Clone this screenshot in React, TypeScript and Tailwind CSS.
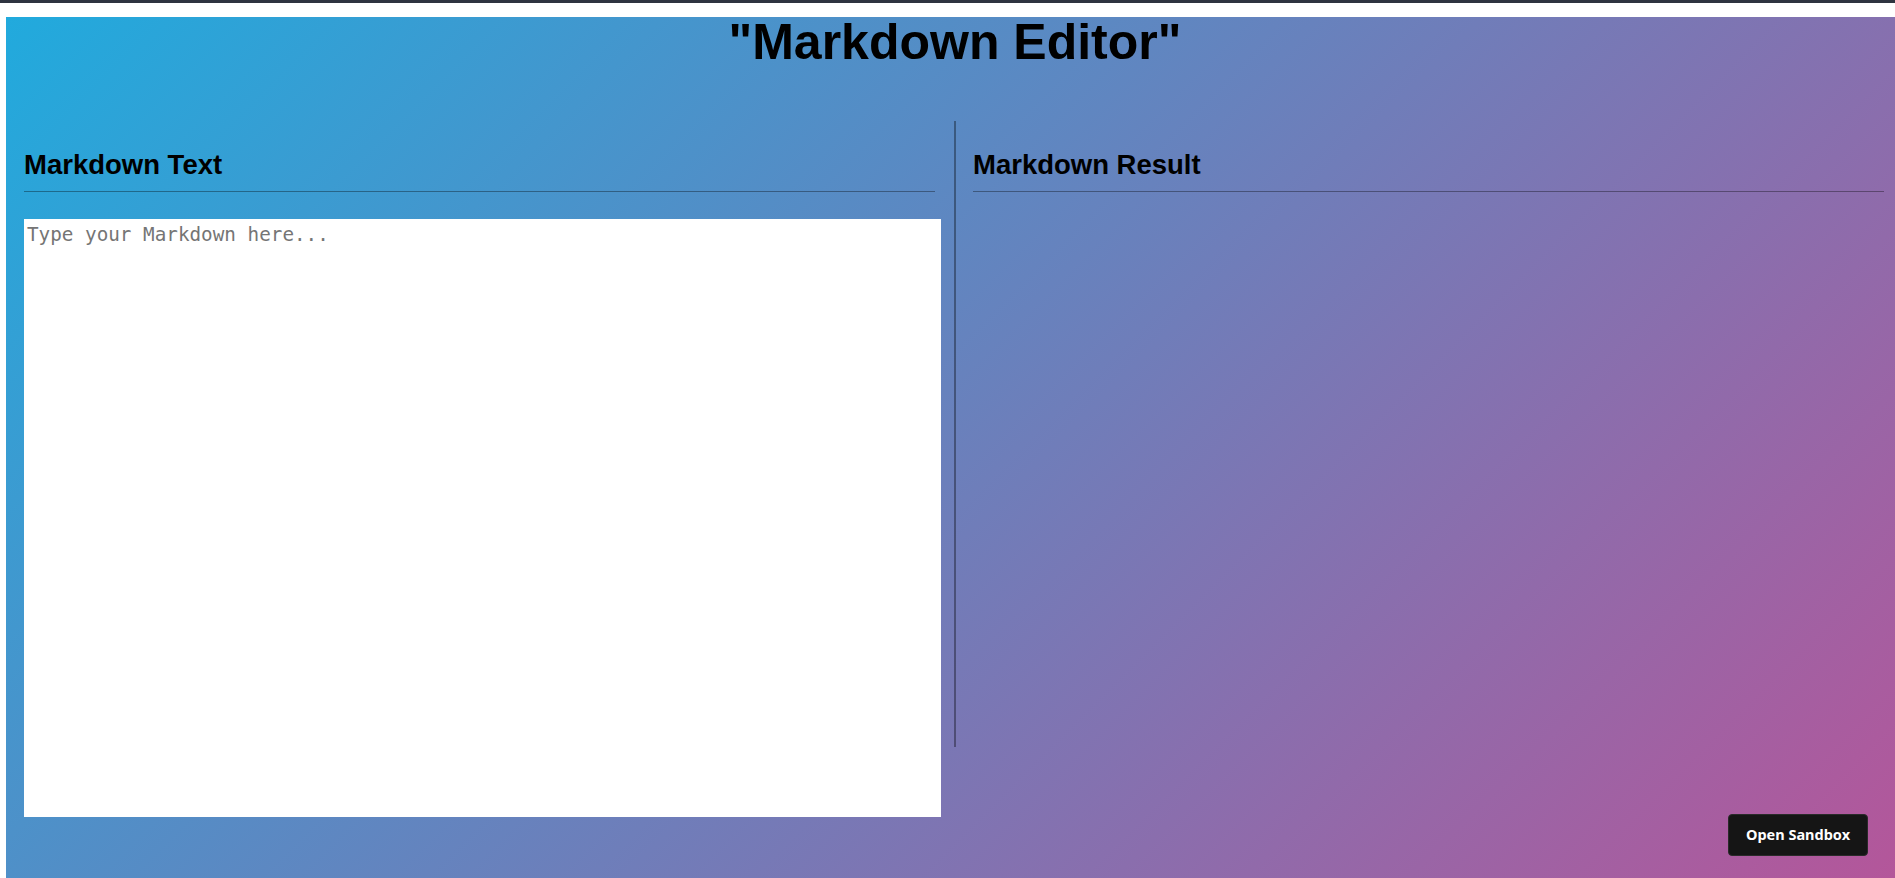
import { useState } from "react";

const sans = { fontFamily: '"Liberation Sans", Arial, sans-serif' };

function Panel({ title, children }: { title: string; children?: React.ReactNode }) {
  return (
    <div className="w-[911px] shrink-0 pt-[28px]">
      <h2
        style={sans}
        className="border-b border-black/35 pb-[11px] text-[27.5px] font-bold leading-[31px] text-black"
      >
        {title}
      </h2>
      {children}
    </div>
  );
}

export default function App() {
  const [text, setText] = useState("");

  return (
    <div className="relative h-[878px] overflow-hidden border-t-[3px] border-[#2e3440] bg-white pl-[6px] pt-[10px]">
      <div className="h-[865px] w-[1889px] bg-[linear-gradient(135deg,#21aadd,#b4569a)]">
        <h1
          style={sans}
          className="mt-[4px] pl-[9px] text-center text-[50px] font-bold leading-[50px] text-black"
        >
          "Markdown Editor"
        </h1>

        <div className="mt-[54px] flex items-start pl-[18px]">
          <Panel title="Markdown Text">
            <textarea
              value={text}
              onChange={(e) => setText(e.target.value)}
              placeholder="Type your Markdown here..."
              style={{ fontFamily: '"DejaVu Sans Mono", monospace' }}
              className="mt-[27px] block h-[598px] w-[917px] resize-none border-0 bg-white px-[3px] pt-[5px] text-[19.3px] leading-[22px] text-black outline-none placeholder:text-[#757575]"
            />
          </Panel>

          <div className="ml-[19px] h-[626px] w-[2px] shrink-0 bg-black/35" />

          <div className="ml-[17px]">
            <Panel title="Markdown Result" />
          </div>
        </div>
      </div>

      <button
        style={{ fontFamily: '"Noto Sans", "Open Sans", sans-serif' }}
        className="absolute bottom-[22px] right-[27px] h-[42px] w-[140px] rounded-[4px] border border-[#2a2a2a] bg-[#151515] text-[14.5px] font-bold text-white"
      >
        Open Sandbox
      </button>
    </div>
  );
}
